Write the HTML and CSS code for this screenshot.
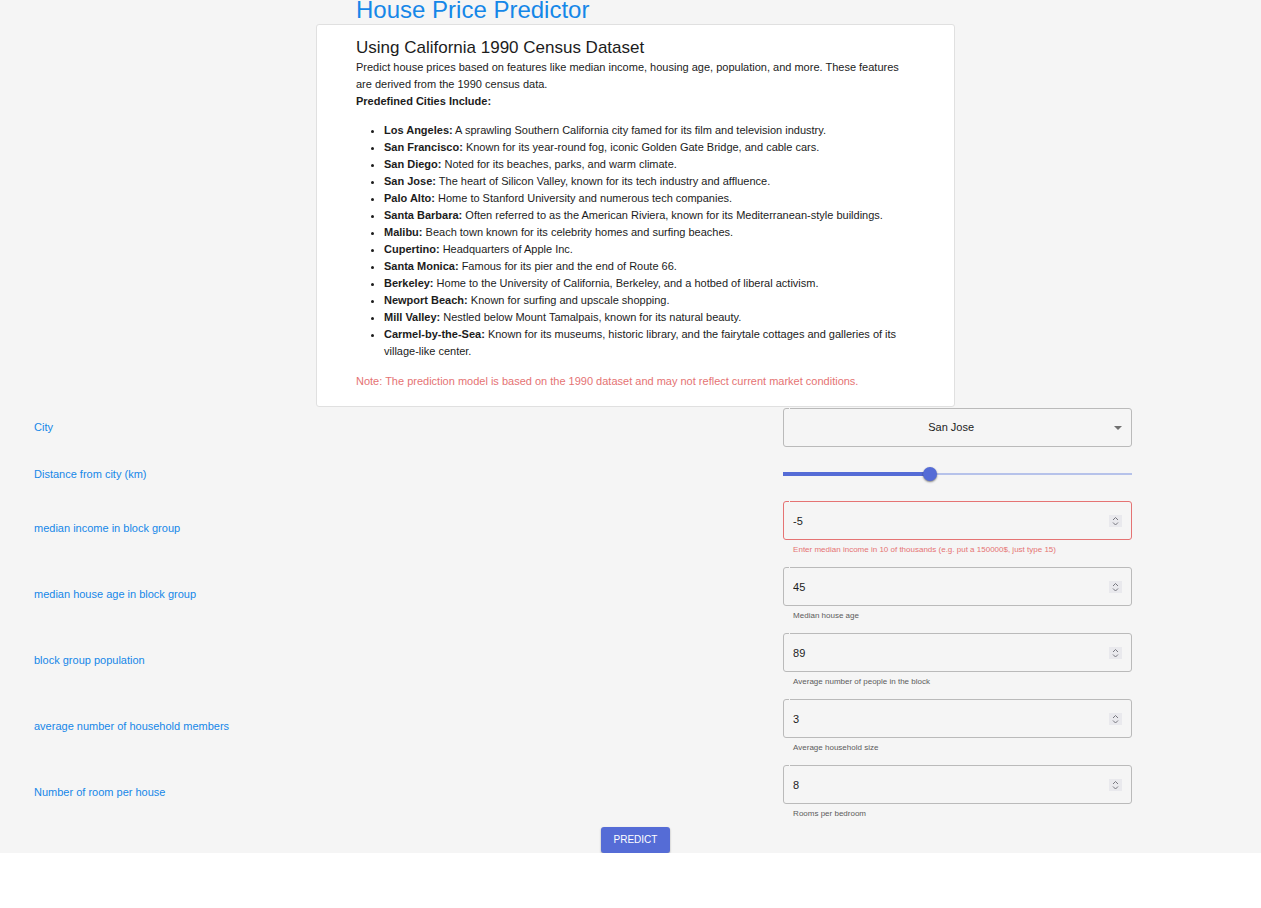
FILE: index.html
```
<!DOCTYPE html>
<html lang="en">
<head>
<meta charset="utf-8">
<meta name="viewport" content="width=device-width, initial-scale=1">
<title>House Price Predictor</title>
<link rel="stylesheet" href="styles.css">
</head>
<body>
<main class="page">
  <header class="intro">
    <h1 class="title">House Price Predictor</h1>
    <section class="card">
      <h2 class="card-title">Using California 1990 Census Dataset</h2>
      <p>Predict house prices based on features like median income, housing age, population, and more. These features are derived from the 1990 census data.</p>
      <p><strong>Predefined Cities Include:</strong></p>
      <ul class="cities">
        <li><strong>Los Angeles:</strong> A sprawling Southern California city famed for its film and television industry.</li>
        <li><strong>San Francisco:</strong> Known for its year-round fog, iconic Golden Gate Bridge, and cable cars.</li>
        <li><strong>San Diego:</strong> Noted for its beaches, parks, and warm climate.</li>
        <li><strong>San Jose:</strong> The heart of Silicon Valley, known for its tech industry and affluence.</li>
        <li><strong>Palo Alto:</strong> Home to Stanford University and numerous tech companies.</li>
        <li><strong>Santa Barbara:</strong> Often referred to as the American Riviera, known for its Mediterranean-style buildings.</li>
        <li><strong>Malibu:</strong> Beach town known for its celebrity homes and surfing beaches.</li>
        <li><strong>Cupertino:</strong> Headquarters of Apple Inc.</li>
        <li><strong>Santa Monica:</strong> Famous for its pier and the end of Route 66.</li>
        <li><strong>Berkeley:</strong> Home to the University of California, Berkeley, and a hotbed of liberal activism.</li>
        <li><strong>Newport Beach:</strong> Known for surfing and upscale shopping.</li>
        <li><strong>Mill Valley:</strong> Nestled below Mount Tamalpais, known for its natural beauty.</li>
        <li><strong>Carmel-by-the-Sea:</strong> Known for its museums, historic library, and the fairytale cottages and galleries of its village-like center.</li>
      </ul>
      <p class="note">Note: The prediction model is based on the 1990 dataset and may not reflect current market conditions.</p>
    </section>
  </header>

  <form class="form">
    <div class="row">
      <label class="label" for="city">City</label>
      <div class="control">
        <div class="field">
          <select class="select" id="city"><option>San Jose</option></select>
          <svg class="arrow" viewBox="0 0 8 4" aria-hidden="true"><path d="M0 0h8L4 4z" fill="#707070"/></svg>
        </div>
      </div>
    </div>
    <div class="row row-slider">
      <label class="label" for="distance">Distance from city (km)</label>
      <div class="control">
        <input class="slider" id="distance" type="range" min="0" max="60" value="25" style="--fill: 41.7%">
      </div>
    </div>
    <div class="row">
      <label class="label" for="income">median income in block group</label>
      <div class="control">
        <div class="field field-error">
          <input class="input" id="income" type="number" value="-5" aria-invalid="true" aria-describedby="income-help">
          <svg class="spinner" viewBox="0 0 13 12" aria-hidden="true"><path d="M4 5L6.5 2.5L9 5M4 7.5L6.5 10L9 7.5"/></svg>
        </div>
        <p class="help help-error" id="income-help">Enter median income in 10 of thousands (e.g. put a 150000$, just type 15)</p>
      </div>
    </div>
    <div class="row">
      <label class="label" for="age">median house age in block group</label>
      <div class="control">
        <div class="field">
          <input class="input" id="age" type="number" value="45" aria-describedby="age-help">
          <svg class="spinner" viewBox="0 0 13 12" aria-hidden="true"><path d="M4 5L6.5 2.5L9 5M4 7.5L6.5 10L9 7.5"/></svg>
        </div>
        <p class="help" id="age-help">Median house age</p>
      </div>
    </div>
    <div class="row">
      <label class="label" for="population">block group population</label>
      <div class="control">
        <div class="field">
          <input class="input" id="population" type="number" value="89" aria-describedby="population-help">
          <svg class="spinner" viewBox="0 0 13 12" aria-hidden="true"><path d="M4 5L6.5 2.5L9 5M4 7.5L6.5 10L9 7.5"/></svg>
        </div>
        <p class="help" id="population-help">Average number of people in the block</p>
      </div>
    </div>
    <div class="row">
      <label class="label" for="members">average number of household members</label>
      <div class="control">
        <div class="field">
          <input class="input" id="members" type="number" value="3" aria-describedby="members-help">
          <svg class="spinner" viewBox="0 0 13 12" aria-hidden="true"><path d="M4 5L6.5 2.5L9 5M4 7.5L6.5 10L9 7.5"/></svg>
        </div>
        <p class="help" id="members-help">Average household size</p>
      </div>
    </div>
    <div class="row">
      <label class="label" for="rooms">Number of room per house</label>
      <div class="control">
        <div class="field">
          <input class="input" id="rooms" type="number" value="8" aria-describedby="rooms-help">
          <svg class="spinner" viewBox="0 0 13 12" aria-hidden="true"><path d="M4 5L6.5 2.5L9 5M4 7.5L6.5 10L9 7.5"/></svg>
        </div>
        <p class="help" id="rooms-help">Rooms per bedroom</p>
      </div>
    </div>
    <button class="submit" type="button">PREDICT</button>
  </form>
</main>
</body>
</html>
```
FILE: styles.css
```
* { box-sizing: border-box; }

body {
  margin: 0;
  background: #fff;
  color: #1c1c1c;
  font: 11px/17px "Liberation Sans", Arial, sans-serif;
}

h1, h2, p { margin: 0; }

.page {
  padding-left: 10px;
  background: #f5f5f5;
}

.intro {
  width: 100%;
  max-width: 639px;
  margin: 0 auto;
}

.title {
  padding-bottom: 4px;
  padding-left: 40px;
  color: #1587e8;
  font-size: 24px;
  font-weight: 400;
  line-height: 20px;
}

.card {
  padding: 12px 39px 16px;
  border: 1px solid #e0e0e0;
  border-radius: 3px;
  background: #fff;
}

.card-title {
  font-size: 17px;
  font-weight: 400;
  line-height: 22px;
}

.cities {
  margin: 12px 0 13px;
  padding-left: 28px;
}

.note { color: #e57373; }

.form {
  display: flex;
  flex-direction: column;
  gap: 11px;
  padding-top: 1px;
}

.row {
  display: grid;
  grid-template-columns: 618fr 279fr 103fr;
  align-items: center;
}

.row-slider { min-height: 32px; }

.label {
  justify-self: start;
  padding-left: 24px;
  color: #1587e8;
}

.control { min-width: 0; }

.field {
  position: relative;
  display: flex;
  align-items: center;
  height: 39px;
  border: 1px solid #bababa;
  border-radius: 3px;
}

/* Notch in the top border of the outline */
.field::before {
  content: "";
  position: absolute;
  top: -1px;
  left: 5px;
  width: 1px;
  height: 1px;
  background: #f5f5f5;
}

.field-error { border-color: #e57373; }

.input,
.select {
  flex: 1;
  min-width: 0;
  height: 100%;
  border: 0;
  outline: 0;
  background: transparent;
  color: inherit;
  font: inherit;
  appearance: none;
}

.input {
  padding: 0 9px;
  appearance: textfield;
}

.input::-webkit-inner-spin-button,
.input::-webkit-outer-spin-button {
  margin: 0;
  appearance: none;
}

.select {
  padding: 0 22px 0 9px;
  text-align: center;
  text-align-last: center;
}

.arrow {
  position: absolute;
  right: 9px;
  width: 8px;
  height: 4px;
  pointer-events: none;
}

.spinner {
  width: 13px;
  height: 12px;
  margin-right: 9px;
  background: #e9e9ed;
  fill: none;
  stroke: #77777f;
}

.help {
  margin: 3px 10px 0;
  color: #5c5c5c;
  font-size: 8px;
  line-height: 13px;
}

.help-error { color: #e57373; }

.slider {
  display: block;
  width: 100%;
  height: 14px;
  margin: 0;
  appearance: none;
  background:
    linear-gradient(#556cd6, #556cd6) left center / var(--fill) 4px no-repeat,
    linear-gradient(#b6c2ea, #b6c2ea) left center / 100% 2px no-repeat;
}

.slider::-webkit-slider-thumb {
  width: 14px;
  height: 14px;
  border-radius: 50%;
  background: #556cd6;
  box-shadow: 0 1px 2px rgba(0, 0, 0, 0.5);
  appearance: none;
}

.submit {
  align-self: center;
  margin-top: -4px;
  padding: 0 13px;
  border: 0;
  border-radius: 3px;
  background: #556cd6;
  box-shadow: 0 1px 2px rgba(0, 0, 0, 0.35);
  color: #fff;
  font: 10px/26px "Liberation Sans", Arial, sans-serif;
}
```
